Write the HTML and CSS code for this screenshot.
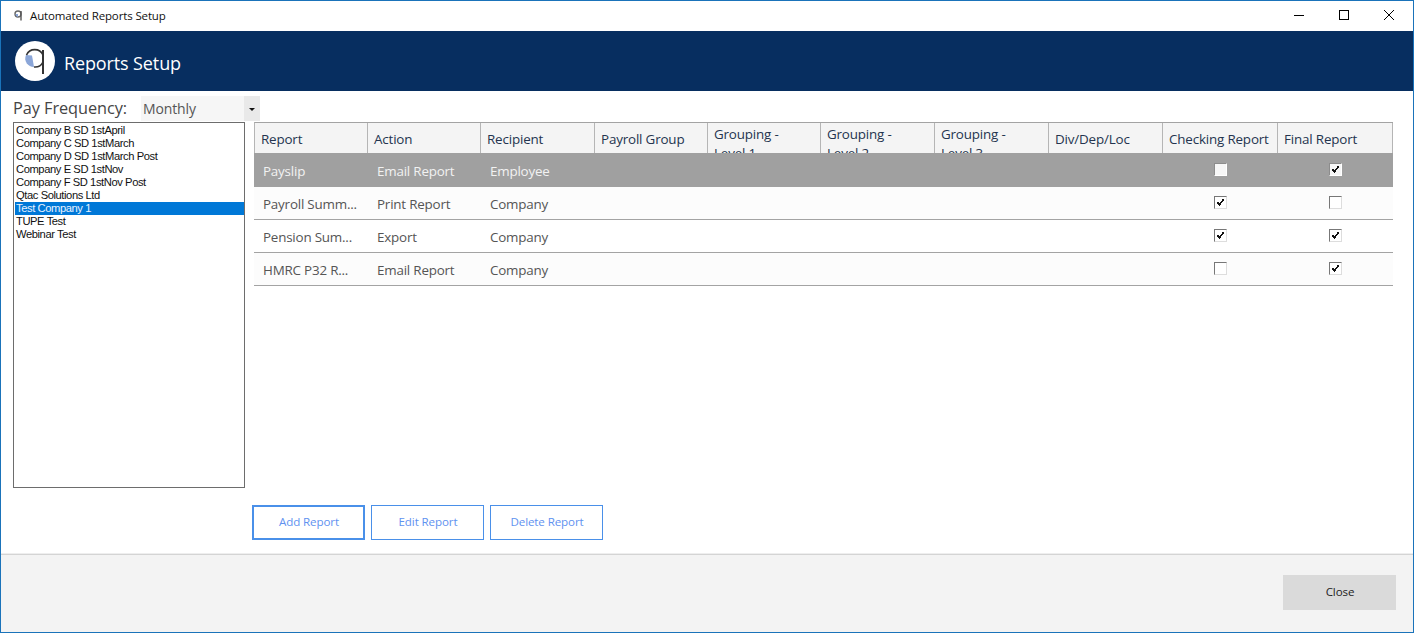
FILE: index.html
```html
<!DOCTYPE html>
<html lang="en">
<head>
<meta charset="utf-8">
<title>Automated Reports Setup</title>
<link rel="stylesheet" href="styles.css">
</head>
<body>
<svg class="defs" width="0" height="0" aria-hidden="true">
  <symbol id="tick" viewBox="0 0 13 13"><path d="M3 6.2 L5.2 8.6 L9.8 3.4" fill="none" stroke="#111" stroke-width="1.9" shape-rendering="crispEdges"/></symbol>
</svg>
<div class="window">
  <div class="titlebar">
    <svg class="app-icon" width="9" height="11" viewBox="0 0 9 11"><circle cx="4" cy="4" r="3" fill="none" stroke="#666" stroke-width="1.4"/><path d="M1.5 4 A3 3 0 0 0 4 7 L4 4 Z" fill="#8ba6d8"/><path d="M7 1 V10.5" stroke="#555" stroke-width="1.4"/></svg>
    <span class="window-title">Automated Reports Setup</span>
    <div class="window-controls">
      <svg width="10" height="10" viewBox="0 0 10 10"><path d="M0 5.5 H10" stroke="#000" stroke-width="1"/></svg>
      <svg width="10" height="10" viewBox="0 0 10 10"><rect x=".5" y=".5" width="9" height="9" fill="none" stroke="#000"/></svg>
      <svg width="10" height="10" viewBox="0 0 10 10"><path d="M0 0 L10 10 M10 0 L0 10" stroke="#000" stroke-width="1"/></svg>
    </div>
  </div>
  <header class="banner">
    <div class="logo">
      <svg width="40" height="40" viewBox="0 0 40 40"><path d="M11 14 L17 14.5 L19 26 A8.5 8.5 0 0 1 11 14 Z" fill="#8ba6d8"/><path d="M11.5 14 A9 9 0 0 1 28 14" fill="none" stroke="#333" stroke-width="1.6"/><path d="M19 26 A9 9 0 0 0 28 21" fill="none" stroke="#333" stroke-width="1.6"/><path d="M28 9 V33" stroke="#333" stroke-width="2"/></svg>
    </div>
    <h1 class="banner-title">Reports Setup</h1>
  </header>
  <main class="content">
    <div class="freq-row">
      <span class="freq-label">Pay Frequency:</span>
      <div class="select"><span class="select-value">Monthly</span><span class="select-arrow"></span></div>
    </div>
    <div class="panes">
      <ul class="company-list">
        <li>Company B SD 1stApril</li>
        <li>Company C SD 1stMarch</li>
        <li>Company D SD 1stMarch Post</li>
        <li>Company E SD 1stNov</li>
        <li>Company F SD 1stNov Post</li>
        <li>Qtac Solutions Ltd</li>
        <li class="is-selected">Test Company 1</li>
        <li>TUPE Test</li>
        <li>Webinar Test</li>
      </ul>
      <div class="reports">
        <div class="table">
          <div class="head">
            <div class="th">Report</div>
            <div class="th">Action</div>
            <div class="th">Recipient</div>
            <div class="th">Payroll Group</div>
            <div class="th wrap">Grouping - Level 1</div>
            <div class="th wrap">Grouping - Level 2</div>
            <div class="th wrap">Grouping - Level 3</div>
            <div class="th">Div/Dep/Loc</div>
            <div class="th">Checking Report</div>
            <div class="th">Final Report</div>
          </div>
          <div class="row selected">
            <div class="td">Payslip</div><div class="td">Email Report</div><div class="td">Employee</div>
            <div class="td"></div><div class="td"></div><div class="td"></div><div class="td"></div><div class="td"></div>
            <div class="td check"><span class="box"></span></div>
            <div class="td check"><span class="box"><svg><use href="#tick"/></svg></span></div>
          </div>
          <div class="row">
            <div class="td">Payroll Summ...</div><div class="td">Print Report</div><div class="td">Company</div>
            <div class="td"></div><div class="td"></div><div class="td"></div><div class="td"></div><div class="td"></div>
            <div class="td check"><span class="box"><svg><use href="#tick"/></svg></span></div>
            <div class="td check"><span class="box"></span></div>
          </div>
          <div class="row">
            <div class="td">Pension Sum...</div><div class="td">Export</div><div class="td">Company</div>
            <div class="td"></div><div class="td"></div><div class="td"></div><div class="td"></div><div class="td"></div>
            <div class="td check"><span class="box"><svg><use href="#tick"/></svg></span></div>
            <div class="td check"><span class="box"><svg><use href="#tick"/></svg></span></div>
          </div>
          <div class="row">
            <div class="td">HMRC P32 R...</div><div class="td">Email Report</div><div class="td">Company</div>
            <div class="td"></div><div class="td"></div><div class="td"></div><div class="td"></div><div class="td"></div>
            <div class="td check"><span class="box"></span></div>
            <div class="td check"><span class="box"><svg><use href="#tick"/></svg></span></div>
          </div>
        </div>
        <div class="actions">
          <button class="btn is-default">Add Report</button>
          <button class="btn">Edit Report</button>
          <button class="btn">Delete Report</button>
        </div>
      </div>
    </div>
  </main>
  <footer class="footer">
    <button class="close-btn">Close</button>
  </footer>
</div>
</body>
</html>
```
FILE: styles.css
```css
* { box-sizing: border-box; }
html, body { margin: 0; padding: 0; height: 100%; overflow: hidden; background: #fff; }
body { font-family: "Open Sans", "Noto Sans", sans-serif; }
.defs { position: absolute; }
.window { height: 633px; display: flex; flex-direction: column; border: 1px solid #1a73ba; background: #fff; }

.titlebar { height: 30px; flex: none; display: flex; align-items: center; padding-left: 13px; background: #fff; }
.app-icon { margin-top: -2px; }
.window-title { margin-left: 7px; margin-top: -2px; font-size: 11.5px; letter-spacing: -.13px; color: #111; }
.window-controls { margin-left: auto; display: flex; gap: 35px; padding-right: 19px; margin-top: -2px; }
.window-controls svg { display: block; }

.banner { height: 60px; flex: none; background: #072e60; display: flex; align-items: center; padding-left: 14px; }
.logo { width: 40px; height: 40px; border-radius: 50%; background: #fff; }
.logo svg { display: block; }
.banner-title { margin: 4px 0 0 9px; font-size: 18px; font-weight: 400; letter-spacing: -.12px; color: #fff; }

.content { flex: 1; min-height: 0; padding: 5px 0 0 12px; display: flex; flex-direction: column; }
.freq-row { height: 26px; flex: none; display: flex; align-items: center; }
.freq-label { font-size: 16.3px; letter-spacing: -.05px; color: #444; width: 128px; padding-bottom: 2px; white-space: nowrap; }
.select { width: 119px; height: 25px; margin-top: -1px; display: flex; align-items: center; background: #f6f6f6; }
.select-value { flex: 1; padding: 0 0 1px 2px; font-size: 14px; letter-spacing: -.12px; color: #555; }
.select-arrow { width: 16px; height: 25px; background: #e9e9e9; position: relative; }
.select-arrow::after { content: ""; position: absolute; left: 5px; top: 12px; border: 3px solid transparent; border-top: 3px solid #111; border-bottom: 0; }

.panes { display: flex; align-items: flex-start; }
.company-list { margin: 0; padding: 1px 0 0 1px; width: 232px; height: 366px; list-style: none; border: 1px solid #6d6d6d; background: #fff; font-family: "Liberation Sans", Arial, sans-serif; font-size: 11.2px; letter-spacing: -.42px; color: #111; flex: none; }
.company-list li { height: 13px; line-height: 13px; padding-left: 1px; white-space: nowrap; }
.company-list .is-selected { background: #0078d7; color: #e8f2ff; }

.reports { margin-left: 7px; flex: none; width: 1143px; }
.table { margin-left: 2px; width: 1139px; font-size: 13.4px; letter-spacing: -.2px; }
.head, .row { display: grid; grid-template-columns: 113px 113px 114px 113px 113px 114px 114px 114px 115px 116px; }
.head { height: 31px; border-top: 1px solid #a3a3a3; background: #f4f4f4; border-left: 1px solid #b5b5b5; }
.th { height: 30px; overflow: hidden; padding: 7px 6px 0 6px; line-height: 19px; letter-spacing: -.17px; color: #24344f; border-right: 1px solid #b5b5b5; white-space: nowrap; }
.th:last-child { margin-right: 1px; }
.th.wrap { white-space: normal; padding-top: 2px; padding-right: 30px; }
.row { height: 33px; background: #fcfcfc; color: #555; border-bottom: 1px solid #a3a3a3; }
.row:nth-child(4) { background: #fff; }
.row.selected { height: 34px; background: #a0a0a0; color: #f2f2f2; border-bottom: 0; }
.td { padding-left: 9px; padding-top: 1px; line-height: 33px; white-space: nowrap; overflow: hidden; }
.selected .td { padding-top: 2px; }
.td:nth-child(2), .td:nth-child(3) { padding-left: 10px; }
.td.check { display: flex; justify-content: center; align-items: center; padding: 0 0 1px 2px; }
.td.check:last-child { padding-left: 1px; }
.selected .td.check { padding-top: 0; padding-bottom: 1px; }
.box { width: 13px; height: 13px; background: #fff; border: 1px solid; border-color: #777 #ddd #ddd #777; display: block; }
.selected .box { background: #f6f6f6; border-color: #8c8c8c #fff #fff #8c8c8c; }
.box svg { display: block; width: 13px; height: 13px; margin: -1px; }

.actions { margin-top: 219px; display: flex; gap: 6px; }
.btn { width: 113px; height: 35px; padding: 0 0 2px 1px; background: #fff; border: 1px solid #4a90e9; font-family: inherit; font-size: 11.6px; letter-spacing: -.12px; color: #5f92f0; }
.btn.is-default { border-width: 2px; }

.footer { height: 78px; flex: none; background: #f3f3f3; border-top: 1px solid #d4d4d4; box-shadow: 0 -1px 0 #eee; display: flex; justify-content: flex-end; align-items: flex-start; padding: 20px 17px 0 0; }
.close-btn { width: 113px; height: 35px; padding: 0 0 2px 1px; border: 0; background: #dadada; font-family: inherit; font-size: 11.6px; letter-spacing: -.12px; color: #222; }
```
